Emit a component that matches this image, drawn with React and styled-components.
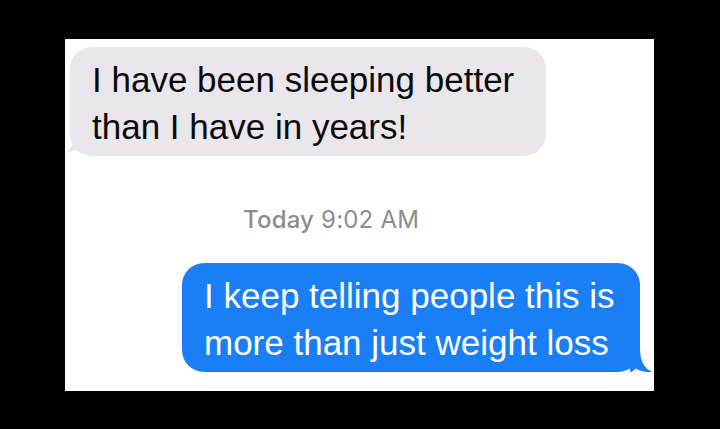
import React from 'react';
import styled, { createGlobalStyle } from 'styled-components';

const GlobalStyle = createGlobalStyle`
    body {
        margin: 0;
        background: #000;
    }
`;

const messages = [
    { id: 1, fromMe: false, text: 'I have been sleeping better than I have in years!', width: 476 },
    { id: 2, stamp: true },
    { id: 3, fromMe: true, text: 'I keep telling people this is more than just weight loss', width: 458 },
];

export default function App() {
    return (
        <>
            <GlobalStyle />
            <Screen>
                <Thread>
                    {messages.map(m =>
                        m.stamp ? (
                            <Stamp key={m.id}>
                                <strong>Today</strong> 9:02 AM
                            </Stamp>
                        ) : (
                            <Row key={m.id} fromMe={m.fromMe}>
                                <Bubble fromMe={m.fromMe} style={{ width: m.width }}>
                                    {m.text}
                                    <Tail fromMe={m.fromMe} />
                                </Bubble>
                            </Row>
                        )
                    )}
                </Thread>
            </Screen>
        </>
    );
}

function Tail({ fromMe }) {
    // little curl at the bottom corner, mirrored for incoming messages
    return (
        <TailSvg fromMe={fromMe} width="22" height="24" viewBox="0 0 22 24">
            <path
                d="M0 0 H10 C10 13 14 20 22 24 C16 24.6 10 23 6 20.5 C4 22.4 2 24 0 24 Z"
                fill={fromMe ? '#1a7ef6' : '#e9e7ec'}
            />
        </TailSvg>
    );
}

const Screen = styled.div`
    width: 720px;
    height: 429px;
    box-sizing: border-box;
    padding: 39px 0 0 65px;
`;

const Thread = styled.div`
    width: 589px;
    height: 352px;
    box-sizing: border-box;
    background: #fff;
    display: flex;
    flex-direction: column;
    padding: 8px 14px 0 5px;
    overflow: hidden;
`;

const Row = styled.div.withConfig({ shouldForwardProp: p => p !== 'fromMe' })`
    display: flex;
    justify-content: ${p => (p.fromMe ? 'flex-end' : 'flex-start')};
    margin-top: ${p => (p.fromMe ? '33px' : '0')};
`;

const Bubble = styled.div.withConfig({ shouldForwardProp: p => p !== 'fromMe' })`
    position: relative;
    box-sizing: border-box;
    padding: 9px 22px 6px;
    border-radius: 22px;
    background: ${p => (p.fromMe ? '#1a7ef6' : '#e9e7ec')};
    color: ${p => (p.fromMe ? '#fff' : '#0a0a0a')};
    font-family: "Liberation Sans", Arial, sans-serif;
    font-size: 35px;
    line-height: 47px;
`;

const TailSvg = styled.svg.withConfig({ shouldForwardProp: p => p !== 'fromMe' })`
    position: absolute;
    bottom: 0;
    ${p => (p.fromMe ? 'right: -12px;' : 'left: -4px; transform: scaleX(-1); width: 14px;')}
`;

const Stamp = styled.div`
    margin-top: 53px;
    padding-right: 48px;
    text-align: center;
    font-family: Inter, "Liberation Sans", sans-serif;
    font-size: 24px;
    line-height: 21px;
    letter-spacing: 0.2px;
    color: #8b8b90;

    strong {
        font-weight: 500;
    }
`;
